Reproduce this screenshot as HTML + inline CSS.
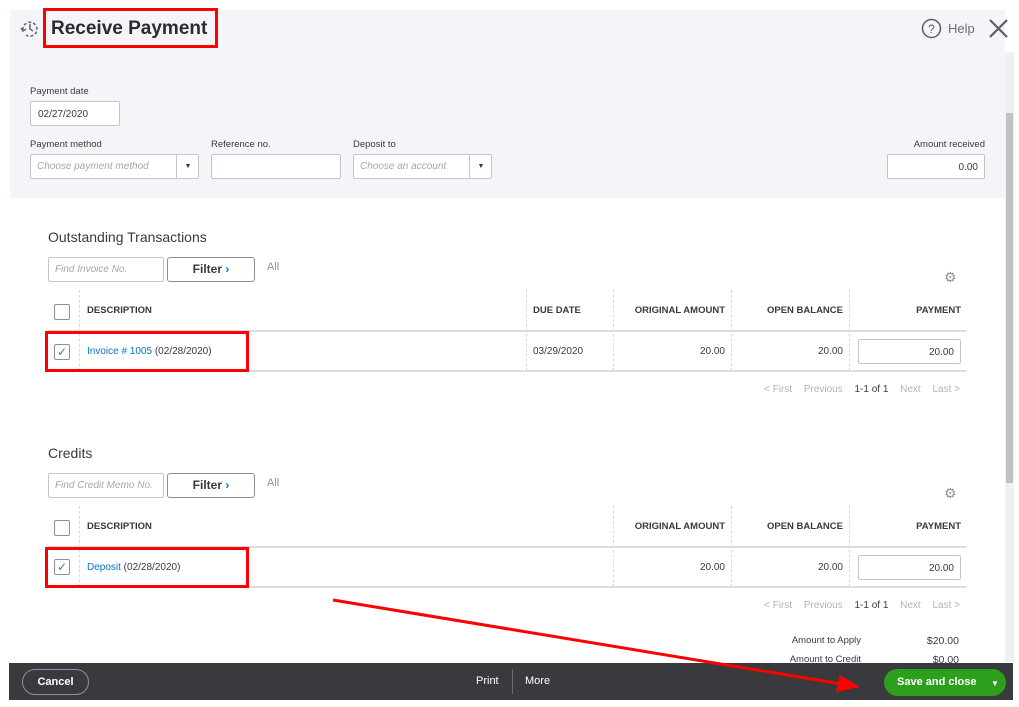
<!DOCTYPE html>
<html><head><meta charset="utf-8"><style>
*{margin:0;padding:0;box-sizing:border-box}
body{width:1019px;height:707px;position:relative;background:#fff;font-family:"Liberation Sans",sans-serif;color:#393a3d;overflow:hidden}
.a{position:absolute}
.lbl{font-size:9.5px;color:#393a3d}
.in{position:absolute;background:#fff;border:1px solid #c4c6c9;border-radius:2px;font-size:10px}
.ph{color:#a5a7aa;font-style:italic;font-size:10px}
.th{font-size:9.5px;font-weight:bold;color:#393a3d}
.td{font-size:10px;color:#393a3d}
.vl{position:absolute;width:1px;border-left:1px dashed #d8d9db}
.hl{position:absolute;height:2px;background:#dcdde0}
.cb{position:absolute;width:16px;height:16px;border:1px solid #8d9096;border-radius:2px;background:#fff}
.red{position:absolute;border:3px solid #f00}
.pg{position:absolute;width:196px;display:flex;justify-content:space-between;font-size:10px;color:#b0b2b5}
.link{color:#0077c5}
.btn{position:absolute;border:1px solid #8d9096;border-radius:3px;background:#fff;font-size:12px;font-weight:bold;text-align:center}
</style></head><body>
<div class="a" style="left:10px;top:10px;width:995px;height:188px;background:#f4f5f8"></div>
<svg class="a" style="left:19px;top:17px" width="22" height="22" viewBox="0 0 22 22" fill="none" stroke="#6b6c72" stroke-width="1.6"><path d="M4 13a7 7 0 1 1 3 5" stroke-dasharray="3 2"/><path d="M11 7v5l3 2"/><path d="M2 11l2 3 3-2"/></svg>
<div class="a" style="left:51px;top:18px;font-size:19px;font-weight:bold;color:#2c2c2e">Receive Payment</div>
<div class="red" style="left:43px;top:8px;width:175px;height:40px"></div>
<svg class="a" style="left:921px;top:18px" width="21" height="21" viewBox="0 0 21 21"><circle cx="10.5" cy="10.5" r="9" fill="none" stroke="#5d5e62" stroke-width="1.5"/><text x="10.5" y="15" font-size="12" text-anchor="middle" fill="#5d5e62" font-family="Liberation Sans">?</text></svg>
<div class="a" style="left:948px;top:21px;font-size:13px;color:#6b6c72">Help</div>
<svg class="a" style="left:988px;top:18px" width="21" height="21" viewBox="0 0 21 21" stroke="#5d5e62" stroke-width="2.2"><path d="M2 2L19 19M19 2L2 19"/></svg>
<div class="a lbl" style="left:30px;top:86px">Payment date</div>
<div class="in" style="left:30px;top:101px;width:90px;height:25px;padding:7px 0 0 7px">02/27/2020</div>
<div class="a lbl" style="left:30px;top:139px">Payment method</div>
<div class="in" style="left:30px;top:154px;width:169px;height:25px;padding:6px 0 0 6px"><span class="ph">Choose payment method</span><span class="a" style="left:145px;top:0;height:23px;border-left:1px solid #c4c6c9;width:23px;font-size:7px;text-align:center;line-height:23px">▼</span></div>
<div class="a lbl" style="left:211px;top:139px">Reference no.</div>
<div class="in" style="left:211px;top:154px;width:130px;height:25px"></div>
<div class="a lbl" style="left:353px;top:139px">Deposit to</div>
<div class="in" style="left:353px;top:154px;width:139px;height:25px;padding:6px 0 0 6px"><span class="ph">Choose an account</span><span class="a" style="left:115px;top:0;height:23px;border-left:1px solid #c4c6c9;width:23px;font-size:7px;text-align:center;line-height:23px">▼</span></div>
<div class="a lbl" style="left:885px;top:139px;width:100px;text-align:right">Amount received</div>
<div class="in" style="left:887px;top:154px;width:98px;height:25px;padding:7px 6px 0 0;text-align:right">0.00</div>
<div class="a" style="left:1005px;top:52px;width:9px;height:610px;background:#f0f0f0"></div>
<div class="a" style="left:1006px;top:113px;width:7px;height:370px;background:#c1c1c1"></div>
<div class="a" style="left:48px;top:229px;font-size:14px;color:#393a3d">Outstanding Transactions</div>
<div class="in" style="left:48px;top:257px;width:116px;height:25px;padding:6px 0 0 6px"><span class="ph">Find Invoice No.</span></div>
<div class="btn" style="left:167px;top:257px;width:88px;height:25px;line-height:23px">Filter <span class="link">›</span></div>
<div class="a" style="left:267px;top:261px;font-size:11px;color:#8d9096">All</div>
<div class="a" style="left:944px;top:269px;font-size:14px;color:#8d9096">⚙</div>
<div class="vl" style="left:79px;top:290px;height:81px"></div>
<div class="vl" style="left:526px;top:290px;height:81px"></div>
<div class="vl" style="left:613px;top:290px;height:81px"></div>
<div class="vl" style="left:731px;top:290px;height:81px"></div>
<div class="vl" style="left:849px;top:290px;height:81px"></div>
<div class="hl" style="left:48px;top:330px;width:919px"></div>
<div class="hl" style="left:48px;top:370px;width:919px"></div>
<div class="cb" style="left:54px;top:304px"></div>
<div class="a th" style="left:87px;top:305px">DESCRIPTION</div>
<div class="a th" style="left:533px;top:305px">DUE DATE</div>
<div class="a th" style="left:613px;top:305px;width:112px;text-align:right">ORIGINAL AMOUNT</div>
<div class="a th" style="left:731px;top:305px;width:112px;text-align:right">OPEN BALANCE</div>
<div class="a th" style="left:849px;top:305px;width:112px;text-align:right">PAYMENT</div>
<div class="cb" style="left:54px;top:344px;color:#2ca01c;font-size:12px;line-height:14px;text-align:center">✓</div>
<div class="a td" style="left:87px;top:346px"><span class="link">Invoice # 1005</span> (02/28/2020)</div>
<div class="a td" style="left:533px;top:346px">03/29/2020</div>
<div class="a td" style="left:613px;top:346px;width:112px;text-align:right">20.00</div>
<div class="a td" style="left:731px;top:346px;width:112px;text-align:right">20.00</div>
<div class="in" style="left:858px;top:339px;width:103px;height:25px;padding:7px 6px 0 0;text-align:right">20.00</div>
<div class="red" style="left:45px;top:331px;width:204px;height:41px"></div>
<div class="pg" style="left:764px;top:384px"><span>&lt; First</span><span>Previous</span><span style="color:#393a3d">1-1 of 1</span><span>Next</span><span>Last &gt;</span></div>
<div class="a" style="left:48px;top:445px;font-size:14px;color:#393a3d">Credits</div>
<div class="in" style="left:48px;top:473px;width:116px;height:25px;padding:6px 0 0 6px"><span class="ph">Find Credit Memo No.</span></div>
<div class="btn" style="left:167px;top:473px;width:88px;height:25px;line-height:23px">Filter <span class="link">›</span></div>
<div class="a" style="left:267px;top:477px;font-size:11px;color:#8d9096">All</div>
<div class="a" style="left:944px;top:485px;font-size:14px;color:#8d9096">⚙</div>
<div class="vl" style="left:79px;top:506px;height:81px"></div>
<div class="vl" style="left:613px;top:506px;height:81px"></div>
<div class="vl" style="left:731px;top:506px;height:81px"></div>
<div class="vl" style="left:849px;top:506px;height:81px"></div>
<div class="hl" style="left:48px;top:546px;width:919px"></div>
<div class="hl" style="left:48px;top:586px;width:919px"></div>
<div class="cb" style="left:54px;top:520px"></div>
<div class="a th" style="left:87px;top:521px">DESCRIPTION</div>
<div class="a th" style="left:613px;top:521px;width:112px;text-align:right">ORIGINAL AMOUNT</div>
<div class="a th" style="left:731px;top:521px;width:112px;text-align:right">OPEN BALANCE</div>
<div class="a th" style="left:849px;top:521px;width:112px;text-align:right">PAYMENT</div>
<div class="cb" style="left:54px;top:559px;color:#2ca01c;font-size:12px;line-height:14px;text-align:center">✓</div>
<div class="a td" style="left:87px;top:562px"><span class="link">Deposit</span> (02/28/2020)</div>
<div class="a td" style="left:613px;top:562px;width:112px;text-align:right">20.00</div>
<div class="a td" style="left:731px;top:562px;width:112px;text-align:right">20.00</div>
<div class="in" style="left:858px;top:555px;width:103px;height:25px;padding:7px 6px 0 0;text-align:right">20.00</div>
<div class="red" style="left:45px;top:547px;width:204px;height:41px"></div>
<div class="pg" style="left:764px;top:600px"><span>&lt; First</span><span>Previous</span><span style="color:#393a3d">1-1 of 1</span><span>Next</span><span>Last &gt;</span></div>
<div class="a" style="left:760px;top:635px;width:101px;text-align:right;font-size:9.5px">Amount to Apply</div>
<div class="a" style="left:900px;top:635px;width:59px;text-align:right;font-size:10.5px">$20.00</div>
<div class="a" style="left:760px;top:654px;width:101px;text-align:right;font-size:9.5px">Amount to Credit</div>
<div class="a" style="left:900px;top:654px;width:59px;text-align:right;font-size:10.5px">$0.00</div>
<div class="a" style="left:9px;top:663px;width:1004px;height:37px;background:#393a3d"></div>
<div class="a" style="left:22px;top:669px;width:67px;height:26px;border:1px solid #8d9096;border-radius:13px;color:#fff;font-size:11px;font-weight:bold;text-align:center;line-height:24px">Cancel</div>
<div class="a" style="left:476px;top:675px;color:#fff;font-size:11px">Print</div>
<div class="a" style="left:512px;top:669px;width:1px;height:25px;background:#6b6c72"></div>
<div class="a" style="left:525px;top:675px;color:#fff;font-size:11px">More</div>
<div class="a" style="left:884px;top:669px;width:122px;height:27px;background:#2ca01c;border-radius:14px;color:#fff;font-size:11px;font-weight:bold;line-height:27px;padding-left:13px">Save and close<span class="a" style="left:107px;top:1px;font-size:8px">▼</span></div>
<svg class="a" style="left:0;top:0" width="1019" height="707"><line x1="333" y1="600" x2="842" y2="684" stroke="#f00" stroke-width="3"/><polygon points="860,687 836,692 840,675" fill="#f00"/></svg>
</body></html>
